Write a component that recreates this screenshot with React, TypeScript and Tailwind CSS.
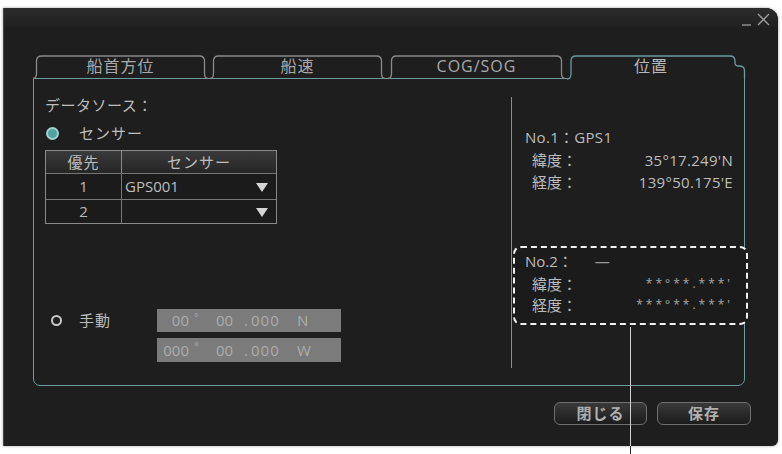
import React from "react";

const FONT = { fontFamily: '"Open Sans", "Noto Sans CJK JP", sans-serif' };

function Tab({ label, width, active = false }: { label: string; width: number; active?: boolean }) {
  const W = width;
  const d = active
    ? `M0,24 Q4,24 4,19 V6 Q4,1 9,1 H${W - 15} Q${W - 10},1 ${W - 10},6 V8 Q${W - 10},11 ${W - 6},11 Q${W - 1},11 ${W - 0.5},15 V24`
    : `M0,23.5 Q3.5,23.5 3.5,18 V6 Q3.5,1 8.5,1 H${W - 8.5} Q${W - 3.5},1 ${W - 3.5},6 V18 Q${W - 3.5},23.5 ${W},23.5`;
  return (
    <div
      className={`relative flex items-start justify-center ${active ? "h-[24px] -mb-px z-10 bg-[#1e1e1e]" : "h-[23px]"}`}
      style={{ width: W }}
    >
      <svg className="absolute inset-0 overflow-visible" width={W} height={24} viewBox={`0 0 ${W} 24`}>
        <path d={d} fill="none" stroke={active ? "#6a9ca2" : "#8a8a8a"} strokeWidth="1.3" />
      </svg>
      <span
        className={`relative pt-[1px] text-[16px] leading-[20px] tracking-[1px] ${active ? "text-[#b8b8b8] pr-[10px]" : "text-[#a9a9a9]"}`}
      >
        {label}
      </span>
    </div>
  );
}

function Tri() {
  return (
    <svg width="12" height="10" viewBox="0 0 12 10">
      <polygon points="0,1 12,1 6,10" fill="#d6d6d6" />
    </svg>
  );
}

function CoordBox({ deg, min, sec, hemi }: { deg: string; min: string; sec: string; hemi: string }) {
  return (
    <div className="flex h-full items-center bg-[#7b7b7b] text-[15px] leading-none text-[#adadad]">
      <span className="w-[32px] text-right">{deg}</span>
      <span className="ml-[5px] w-[8px] -translate-y-[4px] text-[10px]">°</span>
      <span className="ml-[14px] w-[25px]">{min}</span>
      <span className="w-[10px] text-center">.</span>
      <span className="w-[36px] tracking-[1px]">{sec}</span>
      <span className="ml-[10px]">{hemi}</span>
    </div>
  );
}

export default function App() {
  return (
    <div className="relative h-[454px] w-[782px] overflow-hidden bg-white" style={FONT}>
      <div className="ml-[3px] mt-[8px] flex h-[438px] w-[775px] flex-col rounded-tr-[12px] rounded-br-[6px] border-l border-[#4a4a4a] bg-[#1e1e1e] shadow-[0_0_3px_rgba(0,0,0,0.4)]">
        {/* title bar */}
        <div className="flex h-[19px] items-end justify-end rounded-tr-[12px] bg-gradient-to-b from-[#2c2c2c] to-[#202020] pr-[7px]">
          <svg width="30" height="14" viewBox="0 0 30 14" className="mb-[1px]">
            <line x1="1" y1="13" x2="10" y2="13" stroke="#9c9c9c" strokeWidth="1.3" />
            <line x1="17" y1="2" x2="28" y2="13" stroke="#9c9c9c" strokeWidth="1.3" />
            <line x1="28" y1="2" x2="17" y2="13" stroke="#9c9c9c" strokeWidth="1.3" />
          </svg>
        </div>

        <div className="flex flex-col pl-[29px] pt-[28px]">
          {/* tabs */}
          <div className="flex items-end">
            <Tab label="船首方位" width={175} />
            <div className="w-[2px]" />
            <Tab label="船速" width={175} />
            <div className="w-[3px]" />
            <Tab label="COG/SOG" width={177} />
            <div className="w-[2px]" />
            <Tab label="位置" width={178} active />
          </div>

          {/* panel */}
          <div className="flex h-[308px] w-[712px] rounded-b-[7px] border border-[#6a9ca2] bg-[#1e1e1e] text-[15px] text-[#bdbdbd]">
            {/* left column */}
            <div className="flex w-[477px] flex-col pl-[11px]">
              <div className="mt-[16px] h-[20px] leading-[20px] tracking-[0.5px]">データソース：</div>
              <div className="mt-[8px] flex h-[20px] items-center">
                <div className="ml-[1px] flex h-[13px] w-[13px] items-center justify-center rounded-full bg-[#9fd3d0]">
                  <div className="h-[9px] w-[9px] rounded-full bg-[#4fa3a2]" />
                </div>
                <span className="ml-[20px] leading-[20px] tracking-[1px]">センサー</span>
              </div>

              {/* table */}
              <div className="mt-[7px] w-[232px] border border-[#8a8a8a] text-[15px]">
                <div className="flex h-[22px] bg-gradient-to-b from-[#3a3a3a] to-[#262626]">
                  <div className="flex w-[76px] items-center justify-center border-r border-[#8a8a8a] tracking-[1px]">優先</div>
                  <div className="flex flex-1 items-center justify-center tracking-[1px]">センサー</div>
                </div>
                <div className="flex h-[26px] border-t border-[#777] bg-[#1b1b1b]">
                  <div className="flex w-[76px] items-center justify-center border-r border-[#777]">1</div>
                  <div className="flex flex-1 items-center justify-between pl-[3px] pr-[8px]">
                    <span>GPS001</span>
                    <Tri />
                  </div>
                </div>
                <div className="flex h-[24px] border-t border-[#777] bg-[#1b1b1b]">
                  <div className="flex w-[76px] items-center justify-center border-r border-[#777]">2</div>
                  <div className="flex flex-1 items-center justify-end pr-[8px]">
                    <Tri />
                  </div>
                </div>
              </div>

              {/* manual */}
              <div className="mt-[85px] flex">
                <div className="flex h-[23px] items-center">
                  <div className="ml-[6px] h-[11px] w-[11px] rounded-full border-[2px] border-[#c8c8c8]" />
                  <span className="ml-[17px] tracking-[1px]">手動</span>
                </div>
                <div className="ml-[46px] flex flex-col gap-[6px]">
                  <div className="h-[23px] w-[184px]">
                    <CoordBox deg="00" min="00" sec="000" hemi="N" />
                  </div>
                  <div className="h-[24px] w-[184px]">
                    <CoordBox deg="000" min="00" sec="000" hemi="W" />
                  </div>
                </div>
              </div>
            </div>

            {/* divider */}
            <div className="mt-[18px] h-[271px] w-px bg-[#8c8c8c]" />

            {/* right column */}
            <div className="flex flex-1 flex-col">
              <div className="ml-[13px] mt-[48px] h-[20px] leading-[20px] tracking-[0.3px]">No.1：GPS1</div>
              <div className="mt-[3px] flex h-[20px] items-center justify-between pl-[20px] pr-[11px] leading-[20px]">
                <span>緯度：</span>
                <span className="tracking-[0.3px]">35°17.249'N</span>
              </div>
              <div className="mt-[2px] flex h-[20px] items-center justify-between pl-[20px] pr-[11px] leading-[20px]">
                <span>経度：</span>
                <span className="tracking-[0.3px]">139°50.175'E</span>
              </div>

              <div className="-mr-[4px] ml-[1px] mt-[54px] flex h-[79px] flex-col rounded-[8px] border-2 border-dashed border-[#f0f0f0] bg-[#1b1b1b]">
                <div className="ml-[10px] mt-[3px] flex h-[20px] items-center leading-[20px]">
                  <span>No.2：</span>
                  <span className="ml-[22px] text-[#9a9a9a]">―</span>
                </div>
                <div className="mt-[3px] flex h-[20px] items-center justify-between pl-[17px] pr-[13px] leading-[20px]">
                  <span>緯度：</span>
                  <span className="text-[12px] tracking-[3px] text-[#a8a8a8]">**°**.***'</span>
                </div>
                <div className="mt-[1px] flex h-[20px] items-center justify-between pl-[17px] pr-[13px] leading-[20px]">
                  <span>経度：</span>
                  <span className="text-[12px] tracking-[3px] text-[#a8a8a8]">***°**.***'</span>
                </div>
              </div>
            </div>
          </div>

          {/* buttons */}
          <div className="mt-[16px] flex w-[718px] justify-end gap-[10px]">
            <button className="h-[23px] w-[93px] rounded-[6px] border border-[#707070] bg-gradient-to-b from-[#3a3a3a] to-[#1c1c1c] text-[15px] font-bold leading-none tracking-[1px] text-[#b0b0b0]">
              閉じる
            </button>
            <button className="h-[23px] w-[94px] rounded-[6px] border border-[#707070] bg-gradient-to-b from-[#3a3a3a] to-[#1c1c1c] text-[15px] font-bold leading-none tracking-[1px] text-[#b0b0b0]">
              保存
            </button>
          </div>
        </div>
      </div>

      {/* annotation leader line */}
      <div className="absolute left-[630px] top-[327px] h-[119px] w-px bg-[#d0d0d0]" />
      <div className="absolute left-[630px] top-[446px] h-[8px] w-px bg-[#222]" />
    </div>
  );
}
